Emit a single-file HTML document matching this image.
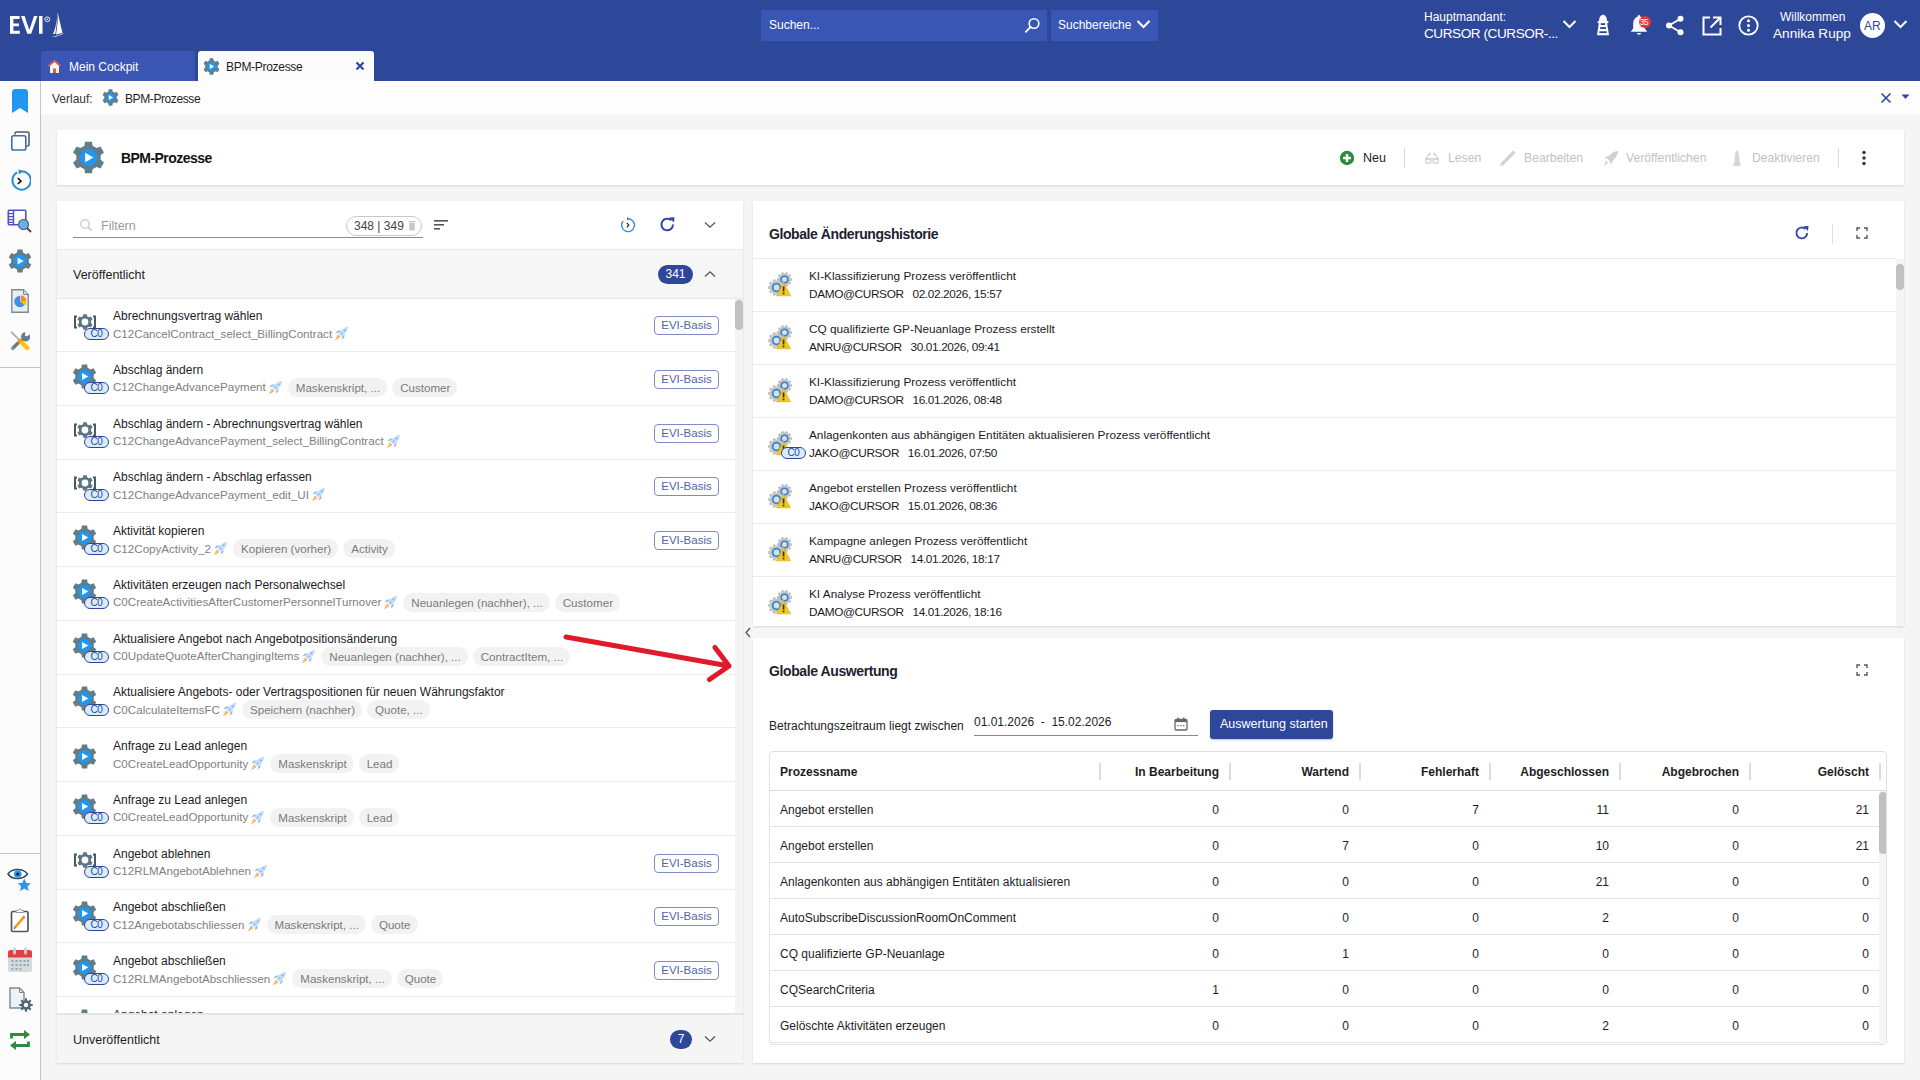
<!DOCTYPE html><html><head><meta charset="utf-8"><title>EVI BPM-Prozesse</title><style>
*{box-sizing:border-box;margin:0;padding:0}
html,body{width:1920px;height:1080px;overflow:hidden}
body{font-family:"Liberation Sans",sans-serif;background:#f5f5f5;position:relative;color:#1d1d1f;font-size:12px}
.a{position:absolute}
.t{position:absolute;white-space:nowrap;line-height:1}
#hdr{left:0;top:0;width:1920px;height:81px;background:#2e4899}
.card{position:absolute;background:#fff;box-shadow:0 1px 2px rgba(0,0,0,.12)}
.row{position:absolute;left:0;width:678px;height:54px;border-bottom:1px solid #ececec}
.ttl{position:absolute;left:56px;top:11px;font-size:12px;color:#1b1b1f;white-space:nowrap;line-height:14px}
.sub{position:absolute;left:56px;top:26px;height:19px;font-size:11.6px;color:#808080;white-space:nowrap;line-height:14px;display:flex;align-items:center}
.chip{display:inline-block;background:#f2f2f2;color:#7a7a7a;border-radius:10px;height:19px;line-height:19px;padding:0 7px 0 8px;margin-left:5px;font-size:11.6px}
.tag{position:absolute;left:597px;top:18px;width:65px;height:19px;border:1px solid #7b8dc4;border-radius:4px;color:#4f64aa;font-size:11.5px;line-height:17px;text-align:center}
.c0{position:absolute;width:25px;height:12px;border:1.3px solid #2e4799;background:#d8ecfc;border-radius:7px;color:#2e4799;font-size:10px;line-height:10px;text-align:center;letter-spacing:-0.3px}
.hrow{position:absolute;left:0;width:1143px;height:53px;border-bottom:1px solid #ececec}
.h1{position:absolute;left:56px;top:10px;font-size:11.8px;color:#1b1b1f;white-space:nowrap;line-height:14px}
.h2{position:absolute;left:56px;top:28px;font-size:11.8px;letter-spacing:-0.35px;color:#1b1b1f;white-space:nowrap;line-height:14px}
.trow{position:absolute;left:0;width:1110px;height:36px;border-bottom:1px solid #e3e3e3}
.tc{position:absolute;top:1px;height:36px;line-height:36px;font-size:12px;color:#1d1d1f;white-space:nowrap}
.num{text-align:right;width:120px}
</style></head><body>
<div id="hdr" class="a"></div>
<svg class="a" style="left:0;top:0" width="52" height="40" viewBox="0 0 52 40"><path d="M10 16 H19.6 V19 H13.4 V23.4 H19 V26.3 H13.4 V30.8 H19.8 V33.8 H10 Z" fill="#fff"/><path d="M21 16 H24.6 L29.3 30 L34 16 H37.5 L31.2 33.8 H27.3 Z" fill="#fff"/><rect x="39" y="16" width="3.5" height="17.8" fill="#fff"/><circle cx="47.3" cy="19.3" r="2.4" stroke="#fff" stroke-width="0.9" fill="none"/><circle cx="47.3" cy="19.3" r="0.8" fill="#fff"/></svg>
<svg class="a" style="left:50px;top:11px" width="16" height="27" viewBox="0 0 16 27"><path d="M7.5 1 C9 8 11 15 12.5 22 L6 23.5 C7.5 16 8 8 7.5 1 Z" fill="#fff"/><path d="M6.6 7 C6.5 13 5 19 3 23 L5.2 23 C6.4 18 7 12 6.6 7Z" fill="#fff"/><path d="M1 26 C6 25 11 23.5 15 21.5 C11 24.5 6 26.2 1 26 Z" fill="#fff"/></svg>
<div class="a" style="left:761px;top:10px;width:286px;height:31px;background:#3a56b5"></div>
<div class="t" style="left:769px;top:19px;font-size:12px;color:#fff">Suchen...</div>
<svg class="a" style="left:1024px;top:17px" width="17" height="17" viewBox="0 0 17 17"><circle cx="10" cy="6.5" r="4.8" stroke="#fff" stroke-width="1.6" fill="none"/><path d="M6.6 10 L1.8 14.8" stroke="#fff" stroke-width="1.8" stroke-linecap="round"/></svg>
<div class="a" style="left:1051px;top:10px;width:107px;height:31px;background:#3a56b5"></div>
<div class="t" style="left:1058px;top:19px;font-size:12px;color:#fff">Suchbereiche</div>
<svg class="a" style="left:1136px;top:19px" width="15" height="11" viewBox="0 0 15 11"><path d="M1.5 2 L7.5 8 L13.5 2" stroke="#fff" stroke-width="2" fill="none"/></svg>
<div class="t" style="left:1424px;top:11px;font-size:12px;color:#fff">Hauptmandant:</div>
<div class="t" style="left:1424px;top:27px;font-size:13.6px;color:#fff;letter-spacing:-0.45px">CURSOR (CURSOR-...</div>
<svg class="a" style="left:1562px;top:19px" width="15" height="11" viewBox="0 0 15 11"><path d="M1.5 2 L7.5 8 L13.5 2" stroke="#fff" stroke-width="2" fill="none"/></svg>
<svg class="a" style="left:1596px;top:14px" width="14" height="22" viewBox="0 0 14 22"><path d="M3 7 C3 3 5 0.7 7 0.7 C9 0.7 11 3 11 7 Z" fill="#fff"/><rect x="1.5" y="7" width="11" height="2.2" rx="1" fill="#fff"/><path d="M2.9 9 H11.1 L13 21.2 H1 Z" fill="#fff"/><rect x="4.7" y="9.2" width="4.4" height="1.8" fill="#2e4899"/><rect x="4.2" y="13.1" width="5.8" height="1.9" fill="#2e4899"/><rect x="3.3" y="17.3" width="7.5" height="1.8" fill="#2e4899"/></svg>
<svg class="a" style="left:1630px;top:14px" width="18" height="22" viewBox="0 0 18 22"><circle cx="9" cy="2.4" r="1.5" fill="#fff"/><path d="M9 2.8 C5 2.8 3.2 6.2 3.2 10 V14.5 L0.8 17.8 H17.2 L14.8 14.5 V10 C14.8 6.2 13 2.8 9 2.8 Z" fill="#fff"/><path d="M6.8 19 C7 21.2 11 21.2 11.2 19 Z" fill="#fff"/></svg>
<div class="a" style="left:1639px;top:16px;width:12px;height:12px;border-radius:6px;background:#e53935"></div>
<div class="t" style="left:1639.5px;top:18px;font-size:8.5px;color:#fff;letter-spacing:-0.4px">35</div>
<svg class="a" style="left:1665px;top:15px" width="20" height="21" viewBox="0 0 20 21"><circle cx="15.5" cy="3.8" r="3" fill="#fff"/><circle cx="4" cy="10.5" r="3" fill="#fff"/><circle cx="15.5" cy="17.2" r="3" fill="#fff"/><path d="M15.5 3.8 L4 10.5 L15.5 17.2" stroke="#fff" stroke-width="1.8" fill="none"/></svg>
<svg class="a" style="left:1702px;top:16px" width="20" height="20" viewBox="0 0 20 20"><path d="M8 1.5 H1.5 V18.5 H18.5 V12" stroke="#fff" stroke-width="2" fill="none"/><path d="M11 1.5 H18.5 V9" stroke="#fff" stroke-width="2" fill="none"/><path d="M18 2 L8.5 11.5" stroke="#fff" stroke-width="2"/></svg>
<svg class="a" style="left:1738px;top:15px" width="21" height="21" viewBox="0 0 21 21"><circle cx="10.5" cy="10.5" r="9.2" stroke="#fff" stroke-width="1.8" fill="none"/><circle cx="10.5" cy="5.8" r="1.5" fill="#fff"/><circle cx="10.5" cy="10.5" r="1.5" fill="#fff"/><circle cx="10.5" cy="15.2" r="1.5" fill="#fff"/></svg>
<div class="t" style="left:1780px;top:11px;font-size:12px;color:#fff">Willkommen</div>
<div class="t" style="left:1773px;top:27px;font-size:13.6px;color:#fff">Annika Rupp</div>
<div class="a" style="left:1860px;top:13px;width:25px;height:25px;border-radius:13px;background:#fff"></div>
<div class="t" style="left:1864px;top:20px;font-size:12px;color:#2e4899">AR</div>
<svg class="a" style="left:1893px;top:19px" width="15" height="11" viewBox="0 0 15 11"><path d="M1.5 2 L7.5 8 L13.5 2" stroke="#fff" stroke-width="2" fill="none"/></svg>
<div class="a" style="left:41px;top:51px;width:154px;height:30px;background:#3a55b4;border-radius:3px 3px 0 0"></div>
<svg class="a" style="left:47px;top:59px" width="15" height="15" viewBox="0 0 15 15"><path d="M7.5 1 L14 7 H12 V14 H3 V7 H1 Z" fill="#f4f4f4"/><path d="M7.5 1 L14 7 L12.6 7.6 L7.5 2.9 L2.4 7.6 L1 7 Z" fill="#e84c3d"/><rect x="6" y="9.5" width="3" height="4.5" fill="#e0612a"/></svg>
<div class="t" style="left:69px;top:61px;font-size:12px;color:#fff">Mein Cockpit</div>
<div class="a" style="left:198px;top:51px;width:176px;height:30px;background:#fcfcfc;border-radius:3px 3px 0 0"></div>
<div class="a" style="left:203px;top:58px"><svg width="17" height="17" viewBox="0 0 24 24"><path d="M9.02 3.51 L9.45 0.48 L14.55 0.48 L14.98 3.51 L17.86 5.17 L20.70 4.03 L23.25 8.45 L20.84 10.34 L20.84 13.66 L23.25 15.55 L20.70 19.97 L17.86 18.83 L14.98 20.49 L14.55 23.52 L9.45 23.52 L9.02 20.49 L6.14 18.83 L3.30 19.97 L0.75 15.55 L3.16 13.66 L3.16 10.34 L0.75 8.45 L3.30 4.03 L6.14 5.17 Z" fill="#607d8b"/><circle cx="12" cy="12" r="6.2" fill="#2196f3"/><path d="M9.6 8.6 L15.6 12 L9.6 15.4 Z" fill="#fff"/></svg></div>
<div class="t" style="left:226px;top:61px;font-size:12px;color:#1d1d1f;letter-spacing:-0.3px">BPM-Prozesse</div>
<svg class="a" style="left:355px;top:61px" width="10" height="10" viewBox="0 0 10 10"><path d="M1.5 1.5 L8.5 8.5 M8.5 1.5 L1.5 8.5" stroke="#2e4899" stroke-width="2.2"/></svg>
<div class="a" style="left:0;top:81px;width:41px;height:999px;background:#fcfcfc;border-right:1px solid #c4c4c4"></div>
<div class="a" style="left:0;top:367px;width:40px;height:1px;background:#c4c4c4"></div>
<div class="a" style="left:0;top:853px;width:40px;height:1px;background:#c4c4c4"></div>
<svg class="a" style="left:12px;top:89px" width="16" height="24" viewBox="0 0 16 24"><path d="M0 3.5 A3.5 3.5 0 0 1 3.5 0 H12.5 A3.5 3.5 0 0 1 16 3.5 V24 L8 19 L0 24 Z" fill="#2196f3"/></svg>
<svg class="a" style="left:10px;top:131px" width="21" height="21" viewBox="0 0 21 21"><path d="M5 3.5 V2.5 A1.5 1.5 0 0 1 6.5 1 H17.5 A1.5 1.5 0 0 1 19 2.5 V13.5 A1.5 1.5 0 0 1 17.5 15 H16.5" stroke="#555" stroke-width="1.5" fill="none"/><rect x="1.8" y="4.8" width="14" height="14.2" rx="1.8" stroke="#3b6db3" stroke-width="1.6" fill="#fff"/></svg>
<svg class="a" style="left:9px;top:169px" width="22" height="23" viewBox="0 0 22 23"><path d="M8.2 3.4 A9.2 9.2 0 1 0 11 2.4" stroke="#2a8ad8" stroke-width="2" fill="none"/><path d="M9.5 0.2 L13.8 2.6 L9.8 5.4 Z" fill="#2a8ad8"/><path d="M8.8 9 L12 12.2 L8.8 15" stroke="#111" stroke-width="1.6" fill="none"/></svg>
<svg class="a" style="left:7px;top:209px" width="25" height="24" viewBox="0 0 25 24"><rect x="1.3" y="1.3" width="17.5" height="14.5" rx="1" stroke="#4b53c2" stroke-width="1.6" fill="#fff"/><path d="M6.5 1.3 V15.8" stroke="#4b53c2" stroke-width="1.4"/><path d="M2 4.6 H6 M2 7.6 H6 M2 10.6 H6 M2 13.4 H6" stroke="#4b53c2" stroke-width="1.2"/><circle cx="16.5" cy="15.5" r="5" fill="#64b0f2" stroke="#555" stroke-width="1.1"/><path d="M20 19 L24 23" stroke="#444" stroke-width="1.8"/></svg>
<div class="a" style="left:8px;top:249px"><svg width="24" height="24" viewBox="0 0 24 24"><path d="M9.02 3.51 L9.45 0.48 L14.55 0.48 L14.98 3.51 L17.86 5.17 L20.70 4.03 L23.25 8.45 L20.84 10.34 L20.84 13.66 L23.25 15.55 L20.70 19.97 L17.86 18.83 L14.98 20.49 L14.55 23.52 L9.45 23.52 L9.02 20.49 L6.14 18.83 L3.30 19.97 L0.75 15.55 L3.16 13.66 L3.16 10.34 L0.75 8.45 L3.30 4.03 L6.14 5.17 Z" fill="#607d8b"/><circle cx="12" cy="12" r="6.2" fill="#2196f3"/><path d="M9.6 8.6 L15.6 12 L9.6 15.4 Z" fill="#fff"/></svg></div>
<svg class="a" style="left:11px;top:289px" width="18" height="24" viewBox="0 0 18 24"><path d="M0.8 0.8 H12.5 L17.2 5.5 V23.2 H0.8 Z" fill="#e9eef5" stroke="#7a8a96" stroke-width="1.4"/><path d="M12.5 0.8 V5.5 H17.2" fill="#cfd8e0" stroke="#7a8a96" stroke-width="1"/><path d="M9 12.5 V6.8 A5.7 5.7 0 1 0 14.7 12.5 Z" fill="#3f8ee8"/><path d="M9.6 12 V6.2 A5.8 5.8 0 0 1 15.4 12 Z" fill="#f28a2e"/><path d="M9.6 12.6 H15.4 A5.8 5.8 0 0 1 13.6 16.8 Z" fill="#f5c023"/></svg>
<svg class="a" style="left:10px;top:331px" width="20" height="20" viewBox="0 0 20 20"><path d="M1.5 1.2 L9.5 9" stroke="#a7b7c1" stroke-width="2" stroke-linecap="round"/><path d="M10 10 L2.8 17.2" stroke="#607d8b" stroke-width="3.4" stroke-linecap="round"/><circle cx="2.8" cy="17.2" r="0.8" fill="#b0bec5"/><path d="M11.2 4.8 A4.6 4.6 0 0 0 15.5 10.5 A4.6 4.6 0 0 0 19.5 3.5 L17 5.6 L14.8 4.4 L15.4 1.2 A4.6 4.6 0 0 0 11.2 4.8 Z" fill="#607d8b"/><path d="M13.5 8 L9.5 12" stroke="#607d8b" stroke-width="2.6"/><path d="M10.5 10.5 L17.2 17" stroke="#ffc107" stroke-width="4.4" stroke-linecap="round"/><path d="M8.6 8.8 L11 11.2" stroke="#ff9800" stroke-width="4.6"/></svg>
<svg class="a" style="left:7px;top:867px" width="27" height="26" viewBox="0 0 27 26"><path d="M1 7 C5 1 16 1 20.5 7 C16 13 5 13 1 7 Z" fill="#fff" stroke="#37474f" stroke-width="1.5"/><circle cx="10.8" cy="7" r="3.8" fill="#2196f3"/><circle cx="10.8" cy="7" r="1.5" fill="#111"/><path d="M17.3 11.5 L19.3 16 L24 16.3 L20.5 19.3 L21.7 24 L17.3 21.5 L13 24 L14.1 19.3 L10.6 16.3 L15.3 16 Z" fill="#2196f3"/></svg>
<svg class="a" style="left:10px;top:908px" width="20" height="25" viewBox="0 0 20 25"><rect x="1.5" y="3.5" width="16.5" height="20" rx="1.5" stroke="#4a5a66" stroke-width="1.7" fill="#fff"/><path d="M6 4.5 V2.5 H8 A1.8 1.8 0 0 1 11.5 2.5 H13.5 V4.5 Z" fill="#fff" stroke="#8a98a4" stroke-width="1"/><path d="M5 19.5 L13.5 9.5" stroke="#f59e0b" stroke-width="2.6"/><path d="M13 10 L14.5 8.3" stroke="#e57373" stroke-width="2.6"/><path d="M4.3 20.8 L5 19.3" stroke="#333" stroke-width="1.2"/></svg>
<svg class="a" style="left:8px;top:947px" width="24" height="25" viewBox="0 0 24 25"><rect x="0" y="3" width="24" height="22" rx="2.5" fill="#d5dadf"/><path d="M0 5.5 A2.5 2.5 0 0 1 2.5 3 H21.5 A2.5 2.5 0 0 1 24 5.5 V10.5 H0 Z" fill="#e53e3e"/><rect x="5" y="0.5" width="3" height="7" rx="1.5" fill="#c9ced4"/><rect x="16" y="0.5" width="3" height="7" rx="1.5" fill="#c9ced4"/><g fill="#9aa3ab"><rect x="3.5" y="13" width="2" height="2"/><rect x="7.5" y="13" width="2" height="2"/><rect x="11.5" y="13" width="2" height="2"/><rect x="15.5" y="13" width="2" height="2"/><rect x="19" y="13" width="2" height="2"/><rect x="3.5" y="17" width="2" height="2"/><rect x="7.5" y="17" width="2" height="2"/><rect x="11.5" y="17" width="2" height="2"/><rect x="15.5" y="17" width="2" height="2"/><rect x="19" y="17" width="2" height="2"/><rect x="3.5" y="21" width="2" height="2"/><rect x="7.5" y="21" width="2" height="2"/><rect x="11.5" y="21" width="2" height="2"/></g></svg>
<svg class="a" style="left:9px;top:987px" width="24" height="26" viewBox="0 0 24 26"><path d="M1 1 H10.5 L15 5.5 V21 H1 Z" fill="#eef2f8" stroke="#7a8a96" stroke-width="1.4"/><path d="M10.5 1 V5.5 H15" fill="none" stroke="#7a8a96" stroke-width="1"/><path d="M21.69 16.96 L23.73 17.04 L23.73 18.96 L21.69 19.04 L21.05 20.58 L22.44 22.08 L21.08 23.44 L19.58 22.05 L18.04 22.69 L17.96 24.73 L16.04 24.73 L15.96 22.69 L14.42 22.05 L12.92 23.44 L11.56 22.08 L12.95 20.58 L12.31 19.04 L10.27 18.96 L10.27 17.04 L12.31 16.96 L12.95 15.42 L11.56 13.92 L12.92 12.56 L14.42 13.95 L15.96 13.31 L16.04 11.27 L17.96 11.27 L18.04 13.31 L19.58 13.95 L21.08 12.56 L22.44 13.92 L21.05 15.42 Z" fill="#4f6573"/><circle cx="17" cy="18" r="2.2" fill="#fff"/></svg>
<svg class="a" style="left:9px;top:1029px" width="22" height="22" viewBox="0 0 22 22"><path d="M2.5 9.5 V5.5 H16" stroke="#2e8b3e" stroke-width="2.8" fill="none"/><path d="M15 1 L21 5.5 L15 10 Z" fill="#2e8b3e"/><path d="M19.5 12.5 V16.5 H6" stroke="#2e8b3e" stroke-width="2.8" fill="none"/><path d="M7 12 L1 16.5 L7 21 Z" fill="#2e8b3e"/></svg>
<div class="a" style="left:41px;top:81px;width:1879px;height:33px;background:#fdfdfd"></div>
<div class="t" style="left:52px;top:93px;font-size:12px;color:#333">Verlauf:</div>
<div class="a" style="left:102px;top:89px"><svg width="17" height="17" viewBox="0 0 24 24"><path d="M9.02 3.51 L9.45 0.48 L14.55 0.48 L14.98 3.51 L17.86 5.17 L20.70 4.03 L23.25 8.45 L20.84 10.34 L20.84 13.66 L23.25 15.55 L20.70 19.97 L17.86 18.83 L14.98 20.49 L14.55 23.52 L9.45 23.52 L9.02 20.49 L6.14 18.83 L3.30 19.97 L0.75 15.55 L3.16 13.66 L3.16 10.34 L0.75 8.45 L3.30 4.03 L6.14 5.17 Z" fill="#607d8b"/><circle cx="12" cy="12" r="6.2" fill="#2196f3"/><path d="M9.6 8.6 L15.6 12 L9.6 15.4 Z" fill="#fff"/></svg></div>
<div class="t" style="left:125px;top:93px;font-size:12px;color:#1d1d1f;letter-spacing:-0.4px">BPM-Prozesse</div>
<svg class="a" style="left:1880px;top:92px" width="12" height="12" viewBox="0 0 12 12"><path d="M1.5 1.5 L10.5 10.5 M10.5 1.5 L1.5 10.5" stroke="#2e4899" stroke-width="1.6"/></svg>
<svg class="a" style="left:1901px;top:94px" width="9" height="6" viewBox="0 0 9 6"><path d="M0.5 0.5 H8.5 L4.5 5 Z" fill="#2e4899"/></svg>
<div class="card" style="left:57px;top:130px;width:1847px;height:55px"></div>
<div class="a" style="left:72px;top:141px"><svg width="33" height="33" viewBox="0 0 24 24"><path d="M9.02 3.51 L9.45 0.48 L14.55 0.48 L14.98 3.51 L17.86 5.17 L20.70 4.03 L23.25 8.45 L20.84 10.34 L20.84 13.66 L23.25 15.55 L20.70 19.97 L17.86 18.83 L14.98 20.49 L14.55 23.52 L9.45 23.52 L9.02 20.49 L6.14 18.83 L3.30 19.97 L0.75 15.55 L3.16 13.66 L3.16 10.34 L0.75 8.45 L3.30 4.03 L6.14 5.17 Z" fill="#607d8b"/><circle cx="12" cy="12" r="6.2" fill="#2196f3"/><path d="M9.6 8.6 L15.6 12 L9.6 15.4 Z" fill="#fff"/></svg></div>
<div class="t" style="left:121px;top:151px;font-size:14px;font-weight:bold;color:#111;letter-spacing:-0.55px">BPM-Prozesse</div>
<svg class="a" style="left:1339px;top:150px" width="16" height="16" viewBox="0 0 16 16"><circle cx="8" cy="8" r="7.2" fill="#2e8b3e"/><path d="M8 4 V12 M4 8 H12" stroke="#fff" stroke-width="2.4"/></svg>
<div class="t" style="left:1363px;top:152px;font-size:12.5px;color:#1d1d1f">Neu</div>
<div class="a" style="left:1404px;top:148px;width:1px;height:20px;background:#d8d8d8"></div>
<svg class="a" style="left:1424px;top:152px" width="16" height="12" viewBox="0 0 16 12"><path d="M1 7 H15" stroke="#cdcdcd" stroke-width="1.3"/><path d="M1.6 7 L5.4 1.2 L6.8 2.8 M14.4 7 L10.6 1.2 L9.2 2.8" stroke="#cdcdcd" stroke-width="1.1" fill="none"/><rect x="1.8" y="6.6" width="5" height="4.6" rx="1.5" stroke="#cdcdcd" stroke-width="1.2" fill="none"/><rect x="9.2" y="6.6" width="5" height="4.6" rx="1.5" stroke="#cdcdcd" stroke-width="1.2" fill="none"/></svg>
<div class="t" style="left:1448px;top:152px;font-size:12.2px;color:#c2c2c2">Lesen</div>
<svg class="a" style="left:1499px;top:149px" width="18" height="18" viewBox="0 0 18 18"><path d="M14 1.5 L16.5 4 L4 16.5 L1.5 17 L1.8 14.3 Z" fill="#d2d2d2"/></svg>
<div class="t" style="left:1524px;top:152px;font-size:12.2px;color:#c2c2c2">Bearbeiten</div>
<svg class="a" style="left:1602px;top:150px" width="17" height="17" viewBox="0 0 17 17"><path d="M16 1 C11 1.5 7.5 4.5 5 8.5 L8.5 12 C12.5 9.5 15.5 6 16 1 Z" fill="#cfcfcf"/><path d="M5 8.5 L2 9 L5 6 L8 5.8 Z M8.5 12 L8 15 L11 12 L11.2 9 Z" fill="#d6d6d6"/><path d="M4 10.5 L6.5 13 L1.5 16 Z" fill="#d6d6d6"/></svg>
<div class="t" style="left:1626px;top:152px;font-size:12.2px;color:#c2c2c2">Veröffentlichen</div>
<svg class="a" style="left:1731px;top:149px" width="12" height="18" viewBox="0 0 12 18"><path d="M6 1 C8 3 8.5 7 8.3 12 L9.5 14.5 V17 H2.5 V14.5 L3.7 12 C3.5 7 4 3 6 1 Z" fill="#d6d6d6"/></svg>
<div class="t" style="left:1752px;top:152px;font-size:12.2px;color:#c2c2c2">Deaktivieren</div>
<div class="a" style="left:1838px;top:148px;width:1px;height:20px;background:#d8d8d8"></div>
<svg class="a" style="left:1861px;top:150px" width="6" height="16" viewBox="0 0 6 16"><circle cx="3" cy="2.5" r="1.7" fill="#333"/><circle cx="3" cy="8" r="1.7" fill="#333"/><circle cx="3" cy="13.5" r="1.7" fill="#333"/></svg>
<div class="card" style="left:57px;top:201px;width:686px;height:862px;overflow:hidden">
<div class="a" style="left:16px;top:36px;width:350px;height:1px;background:#8a8a8a"></div>
<svg class="a" style="left:22px;top:17px" width="14" height="14" viewBox="0 0 14 14"><circle cx="6" cy="6" r="4.3" stroke="#cfcfcf" stroke-width="1.5" fill="none"/><path d="M9.2 9.2 L12.6 12.6" stroke="#cfcfcf" stroke-width="1.8"/></svg>
<div class="t" style="left:44px;top:19px;font-size:12.5px;color:#9a9a9a">Filtern</div>
<div class="a" style="left:289px;top:15px;width:76px;height:20px;border:1px solid #c8c8c8;border-radius:10px"></div>
<div class="t" style="left:297px;top:19px;font-size:12px;color:#444">348 | 349</div>
<svg class="a" style="left:351px;top:19px" width="8" height="11" viewBox="0 0 8 11"><rect x="0.5" y="1" width="7" height="1.2" fill="#c8c8c8"/><rect x="1.2" y="2.8" width="5.6" height="7.6" fill="#c8c8c8"/></svg>
<svg class="a" style="left:377px;top:18px" width="15" height="12" viewBox="0 0 15 12"><rect x="0" y="1" width="14" height="1.6" fill="#555"/><rect x="0" y="5" width="10" height="1.6" fill="#555"/><rect x="0" y="9" width="6" height="1.6" fill="#555"/></svg>
<svg class="a" style="left:563px;top:15px" width="16" height="17" viewBox="0 0 16 17"><path d="M8 2.8 A6.4 6.4 0 1 1 3.2 5" stroke="#3a8fdc" stroke-width="1.4" fill="none"/><path d="M7 0.8 L9.6 2.8 L7 4.8 Z" fill="#3a8fdc"/><path d="M6.8 6.8 L8.8 9.2 L6.8 11.4" stroke="#222" stroke-width="1.2" fill="none"/></svg>
<svg class="a" style="left:602px;top:15px" width="17" height="17" viewBox="0 0 17 17"><path d="M14 8.5 A5.8 5.8 0 1 1 12.2 4.3" stroke="#2e47a8" stroke-width="2" fill="none"/><path d="M10 1.5 L15.5 1.2 L15 6.6 Z" fill="#2e47a8"/></svg>
<svg class="a" style="left:647px;top:20px" width="12" height="8" viewBox="0 0 12 8"><path d="M1 1.5 L6 6.2 L11 1.5" stroke="#555" stroke-width="1.3" fill="none"/></svg>
<div class="a" style="left:0;top:48px;width:686px;height:50px;background:#f6f6f6;border-top:1px solid #e8e8e8;border-bottom:1px solid #e6e6e6"></div>
<div class="t" style="left:16px;top:68px;font-size:12.5px;color:#1d1d1f">Veröffentlicht</div>
<div class="a" style="left:601px;top:64px;width:35px;height:19px;border-radius:10px;background:#2e4799;color:#fff;font-size:12px;line-height:19px;text-align:center">341</div>
<svg class="a" style="left:647px;top:69px" width="12" height="8" viewBox="0 0 12 8"><path d="M1 6.5 L6 1.8 L11 6.5" stroke="#555" stroke-width="1.3" fill="none"/></svg>
<div class="a" style="left:0;top:98px;width:686px;height:714px;overflow:hidden">
<div class="row" style="top:-1.00px">
<div class="a" style="left:16px;top:12px"><svg width="24" height="24" viewBox="0 0 24 24"><path d="M9.98 6.24 L10.27 4.19 L13.73 4.19 L14.02 6.24 L15.97 7.37 L17.90 6.60 L19.63 9.59 L17.99 10.87 L17.99 13.13 L19.63 14.41 L17.90 17.40 L15.97 16.63 L14.02 17.76 L13.73 19.81 L10.27 19.81 L9.98 17.76 L8.03 16.63 L6.10 17.40 L4.37 14.41 L6.01 13.13 L6.01 10.87 L4.37 9.59 L6.10 6.60 L8.03 7.37 Z" fill="#5b7582"/><circle cx="12" cy="12" r="3.4" fill="#fff"/><path d="M4 6.6 H2 V17.4 H4" stroke="#4a5a63" stroke-width="2" fill="none"/><path d="M20 6.6 H22 V17.4 H20" stroke="#4a5a63" stroke-width="2" fill="none"/></svg></div>
<div class="c0" style="left:27px;top:30px">C0</div>
<div class="ttl">Abrechnungsvertrag wählen</div>
<div class="sub">C12CancelContract_select_BillingContract<span style="margin-left:2px"><svg width="15" height="15" viewBox="0 0 15 15" style="display:block"><path d="M14.2 0.8 C10.6 1 7 3.4 4.2 7.6 L7.4 10.8 C11.6 8 14 4.4 14.2 0.8 Z" fill="#c6def7"/><path d="M4.8 6.2 L1.4 7.4 L3.6 4.8 L6.8 4.4 Z" fill="#86b4e6"/><path d="M8.8 10.2 L7.6 13.6 L10.2 11.4 L10.6 8.2 Z" fill="#86b4e6"/><circle cx="10.6" cy="4.4" r="0.9" fill="#74aef0"/><circle cx="7.6" cy="7.4" r="0.8" fill="#74aef0"/><path d="M3.8 8.6 L6.4 11.2 L1 14.2 Z" fill="#f8a35a"/><path d="M3.6 10 L5 11.4 L2.4 12.6 Z" fill="#fcd36a"/></svg></span></div>
<div class="tag">EVI-Basis</div>
</div>
<div class="row" style="top:52.75px">
<div class="a" style="left:15px;top:12px"><svg width="25" height="25" viewBox="0 0 24 24"><path d="M9.02 3.51 L9.45 0.48 L14.55 0.48 L14.98 3.51 L17.86 5.17 L20.70 4.03 L23.25 8.45 L20.84 10.34 L20.84 13.66 L23.25 15.55 L20.70 19.97 L17.86 18.83 L14.98 20.49 L14.55 23.52 L9.45 23.52 L9.02 20.49 L6.14 18.83 L3.30 19.97 L0.75 15.55 L3.16 13.66 L3.16 10.34 L0.75 8.45 L3.30 4.03 L6.14 5.17 Z" fill="#607d8b"/><circle cx="12" cy="12" r="6.2" fill="#2196f3"/><path d="M9.6 8.6 L15.6 12 L9.6 15.4 Z" fill="#fff"/></svg></div>
<div class="c0" style="left:27px;top:30px">C0</div>
<div class="ttl">Abschlag ändern</div>
<div class="sub">C12ChangeAdvancePayment<span style="margin-left:2px"><svg width="15" height="15" viewBox="0 0 15 15" style="display:block"><path d="M14.2 0.8 C10.6 1 7 3.4 4.2 7.6 L7.4 10.8 C11.6 8 14 4.4 14.2 0.8 Z" fill="#c6def7"/><path d="M4.8 6.2 L1.4 7.4 L3.6 4.8 L6.8 4.4 Z" fill="#86b4e6"/><path d="M8.8 10.2 L7.6 13.6 L10.2 11.4 L10.6 8.2 Z" fill="#86b4e6"/><circle cx="10.6" cy="4.4" r="0.9" fill="#74aef0"/><circle cx="7.6" cy="7.4" r="0.8" fill="#74aef0"/><path d="M3.8 8.6 L6.4 11.2 L1 14.2 Z" fill="#f8a35a"/><path d="M3.6 10 L5 11.4 L2.4 12.6 Z" fill="#fcd36a"/></svg></span><span class="chip">Maskenskript, ...</span><span class="chip">Customer</span></div>
<div class="tag">EVI-Basis</div>
</div>
<div class="row" style="top:106.50px">
<div class="a" style="left:16px;top:12px"><svg width="24" height="24" viewBox="0 0 24 24"><path d="M9.98 6.24 L10.27 4.19 L13.73 4.19 L14.02 6.24 L15.97 7.37 L17.90 6.60 L19.63 9.59 L17.99 10.87 L17.99 13.13 L19.63 14.41 L17.90 17.40 L15.97 16.63 L14.02 17.76 L13.73 19.81 L10.27 19.81 L9.98 17.76 L8.03 16.63 L6.10 17.40 L4.37 14.41 L6.01 13.13 L6.01 10.87 L4.37 9.59 L6.10 6.60 L8.03 7.37 Z" fill="#5b7582"/><circle cx="12" cy="12" r="3.4" fill="#fff"/><path d="M4 6.6 H2 V17.4 H4" stroke="#4a5a63" stroke-width="2" fill="none"/><path d="M20 6.6 H22 V17.4 H20" stroke="#4a5a63" stroke-width="2" fill="none"/></svg></div>
<div class="c0" style="left:27px;top:30px">C0</div>
<div class="ttl">Abschlag ändern - Abrechnungsvertrag wählen</div>
<div class="sub">C12ChangeAdvancePayment_select_BillingContract<span style="margin-left:2px"><svg width="15" height="15" viewBox="0 0 15 15" style="display:block"><path d="M14.2 0.8 C10.6 1 7 3.4 4.2 7.6 L7.4 10.8 C11.6 8 14 4.4 14.2 0.8 Z" fill="#c6def7"/><path d="M4.8 6.2 L1.4 7.4 L3.6 4.8 L6.8 4.4 Z" fill="#86b4e6"/><path d="M8.8 10.2 L7.6 13.6 L10.2 11.4 L10.6 8.2 Z" fill="#86b4e6"/><circle cx="10.6" cy="4.4" r="0.9" fill="#74aef0"/><circle cx="7.6" cy="7.4" r="0.8" fill="#74aef0"/><path d="M3.8 8.6 L6.4 11.2 L1 14.2 Z" fill="#f8a35a"/><path d="M3.6 10 L5 11.4 L2.4 12.6 Z" fill="#fcd36a"/></svg></span></div>
<div class="tag">EVI-Basis</div>
</div>
<div class="row" style="top:160.25px">
<div class="a" style="left:16px;top:12px"><svg width="24" height="24" viewBox="0 0 24 24"><path d="M9.98 6.24 L10.27 4.19 L13.73 4.19 L14.02 6.24 L15.97 7.37 L17.90 6.60 L19.63 9.59 L17.99 10.87 L17.99 13.13 L19.63 14.41 L17.90 17.40 L15.97 16.63 L14.02 17.76 L13.73 19.81 L10.27 19.81 L9.98 17.76 L8.03 16.63 L6.10 17.40 L4.37 14.41 L6.01 13.13 L6.01 10.87 L4.37 9.59 L6.10 6.60 L8.03 7.37 Z" fill="#5b7582"/><circle cx="12" cy="12" r="3.4" fill="#fff"/><path d="M4 6.6 H2 V17.4 H4" stroke="#4a5a63" stroke-width="2" fill="none"/><path d="M20 6.6 H22 V17.4 H20" stroke="#4a5a63" stroke-width="2" fill="none"/></svg></div>
<div class="c0" style="left:27px;top:30px">C0</div>
<div class="ttl">Abschlag ändern - Abschlag erfassen</div>
<div class="sub">C12ChangeAdvancePayment_edit_UI<span style="margin-left:2px"><svg width="15" height="15" viewBox="0 0 15 15" style="display:block"><path d="M14.2 0.8 C10.6 1 7 3.4 4.2 7.6 L7.4 10.8 C11.6 8 14 4.4 14.2 0.8 Z" fill="#c6def7"/><path d="M4.8 6.2 L1.4 7.4 L3.6 4.8 L6.8 4.4 Z" fill="#86b4e6"/><path d="M8.8 10.2 L7.6 13.6 L10.2 11.4 L10.6 8.2 Z" fill="#86b4e6"/><circle cx="10.6" cy="4.4" r="0.9" fill="#74aef0"/><circle cx="7.6" cy="7.4" r="0.8" fill="#74aef0"/><path d="M3.8 8.6 L6.4 11.2 L1 14.2 Z" fill="#f8a35a"/><path d="M3.6 10 L5 11.4 L2.4 12.6 Z" fill="#fcd36a"/></svg></span></div>
<div class="tag">EVI-Basis</div>
</div>
<div class="row" style="top:214.00px">
<div class="a" style="left:15px;top:12px"><svg width="25" height="25" viewBox="0 0 24 24"><path d="M9.02 3.51 L9.45 0.48 L14.55 0.48 L14.98 3.51 L17.86 5.17 L20.70 4.03 L23.25 8.45 L20.84 10.34 L20.84 13.66 L23.25 15.55 L20.70 19.97 L17.86 18.83 L14.98 20.49 L14.55 23.52 L9.45 23.52 L9.02 20.49 L6.14 18.83 L3.30 19.97 L0.75 15.55 L3.16 13.66 L3.16 10.34 L0.75 8.45 L3.30 4.03 L6.14 5.17 Z" fill="#607d8b"/><circle cx="12" cy="12" r="6.2" fill="#2196f3"/><path d="M9.6 8.6 L15.6 12 L9.6 15.4 Z" fill="#fff"/></svg></div>
<div class="c0" style="left:27px;top:30px">C0</div>
<div class="ttl">Aktivität kopieren</div>
<div class="sub">C12CopyActivity_2<span style="margin-left:2px"><svg width="15" height="15" viewBox="0 0 15 15" style="display:block"><path d="M14.2 0.8 C10.6 1 7 3.4 4.2 7.6 L7.4 10.8 C11.6 8 14 4.4 14.2 0.8 Z" fill="#c6def7"/><path d="M4.8 6.2 L1.4 7.4 L3.6 4.8 L6.8 4.4 Z" fill="#86b4e6"/><path d="M8.8 10.2 L7.6 13.6 L10.2 11.4 L10.6 8.2 Z" fill="#86b4e6"/><circle cx="10.6" cy="4.4" r="0.9" fill="#74aef0"/><circle cx="7.6" cy="7.4" r="0.8" fill="#74aef0"/><path d="M3.8 8.6 L6.4 11.2 L1 14.2 Z" fill="#f8a35a"/><path d="M3.6 10 L5 11.4 L2.4 12.6 Z" fill="#fcd36a"/></svg></span><span class="chip">Kopieren (vorher)</span><span class="chip">Activity</span></div>
<div class="tag">EVI-Basis</div>
</div>
<div class="row" style="top:267.75px">
<div class="a" style="left:15px;top:12px"><svg width="25" height="25" viewBox="0 0 24 24"><path d="M9.02 3.51 L9.45 0.48 L14.55 0.48 L14.98 3.51 L17.86 5.17 L20.70 4.03 L23.25 8.45 L20.84 10.34 L20.84 13.66 L23.25 15.55 L20.70 19.97 L17.86 18.83 L14.98 20.49 L14.55 23.52 L9.45 23.52 L9.02 20.49 L6.14 18.83 L3.30 19.97 L0.75 15.55 L3.16 13.66 L3.16 10.34 L0.75 8.45 L3.30 4.03 L6.14 5.17 Z" fill="#607d8b"/><circle cx="12" cy="12" r="6.2" fill="#2196f3"/><path d="M9.6 8.6 L15.6 12 L9.6 15.4 Z" fill="#fff"/></svg></div>
<div class="c0" style="left:27px;top:30px">C0</div>
<div class="ttl">Aktivitäten erzeugen nach Personalwechsel</div>
<div class="sub">C0CreateActivitiesAfterCustomerPersonnelTurnover<span style="margin-left:2px"><svg width="15" height="15" viewBox="0 0 15 15" style="display:block"><path d="M14.2 0.8 C10.6 1 7 3.4 4.2 7.6 L7.4 10.8 C11.6 8 14 4.4 14.2 0.8 Z" fill="#c6def7"/><path d="M4.8 6.2 L1.4 7.4 L3.6 4.8 L6.8 4.4 Z" fill="#86b4e6"/><path d="M8.8 10.2 L7.6 13.6 L10.2 11.4 L10.6 8.2 Z" fill="#86b4e6"/><circle cx="10.6" cy="4.4" r="0.9" fill="#74aef0"/><circle cx="7.6" cy="7.4" r="0.8" fill="#74aef0"/><path d="M3.8 8.6 L6.4 11.2 L1 14.2 Z" fill="#f8a35a"/><path d="M3.6 10 L5 11.4 L2.4 12.6 Z" fill="#fcd36a"/></svg></span><span class="chip">Neuanlegen (nachher), ...</span><span class="chip">Customer</span></div>
</div>
<div class="row" style="top:321.50px">
<div class="a" style="left:15px;top:12px"><svg width="25" height="25" viewBox="0 0 24 24"><path d="M9.02 3.51 L9.45 0.48 L14.55 0.48 L14.98 3.51 L17.86 5.17 L20.70 4.03 L23.25 8.45 L20.84 10.34 L20.84 13.66 L23.25 15.55 L20.70 19.97 L17.86 18.83 L14.98 20.49 L14.55 23.52 L9.45 23.52 L9.02 20.49 L6.14 18.83 L3.30 19.97 L0.75 15.55 L3.16 13.66 L3.16 10.34 L0.75 8.45 L3.30 4.03 L6.14 5.17 Z" fill="#607d8b"/><circle cx="12" cy="12" r="6.2" fill="#2196f3"/><path d="M9.6 8.6 L15.6 12 L9.6 15.4 Z" fill="#fff"/></svg></div>
<div class="c0" style="left:27px;top:30px">C0</div>
<div class="ttl">Aktualisiere Angebot nach Angebotpositionsänderung</div>
<div class="sub">C0UpdateQuoteAfterChangingItems<span style="margin-left:2px"><svg width="15" height="15" viewBox="0 0 15 15" style="display:block"><path d="M14.2 0.8 C10.6 1 7 3.4 4.2 7.6 L7.4 10.8 C11.6 8 14 4.4 14.2 0.8 Z" fill="#c6def7"/><path d="M4.8 6.2 L1.4 7.4 L3.6 4.8 L6.8 4.4 Z" fill="#86b4e6"/><path d="M8.8 10.2 L7.6 13.6 L10.2 11.4 L10.6 8.2 Z" fill="#86b4e6"/><circle cx="10.6" cy="4.4" r="0.9" fill="#74aef0"/><circle cx="7.6" cy="7.4" r="0.8" fill="#74aef0"/><path d="M3.8 8.6 L6.4 11.2 L1 14.2 Z" fill="#f8a35a"/><path d="M3.6 10 L5 11.4 L2.4 12.6 Z" fill="#fcd36a"/></svg></span><span class="chip">Neuanlegen (nachher), ...</span><span class="chip">ContractItem, ...</span></div>
</div>
<div class="row" style="top:375.25px">
<div class="a" style="left:15px;top:12px"><svg width="25" height="25" viewBox="0 0 24 24"><path d="M9.02 3.51 L9.45 0.48 L14.55 0.48 L14.98 3.51 L17.86 5.17 L20.70 4.03 L23.25 8.45 L20.84 10.34 L20.84 13.66 L23.25 15.55 L20.70 19.97 L17.86 18.83 L14.98 20.49 L14.55 23.52 L9.45 23.52 L9.02 20.49 L6.14 18.83 L3.30 19.97 L0.75 15.55 L3.16 13.66 L3.16 10.34 L0.75 8.45 L3.30 4.03 L6.14 5.17 Z" fill="#607d8b"/><circle cx="12" cy="12" r="6.2" fill="#2196f3"/><path d="M9.6 8.6 L15.6 12 L9.6 15.4 Z" fill="#fff"/></svg></div>
<div class="c0" style="left:27px;top:30px">C0</div>
<div class="ttl">Aktualisiere Angebots- oder Vertragspositionen für neuen Währungsfaktor</div>
<div class="sub">C0CalculateItemsFC<span style="margin-left:2px"><svg width="15" height="15" viewBox="0 0 15 15" style="display:block"><path d="M14.2 0.8 C10.6 1 7 3.4 4.2 7.6 L7.4 10.8 C11.6 8 14 4.4 14.2 0.8 Z" fill="#c6def7"/><path d="M4.8 6.2 L1.4 7.4 L3.6 4.8 L6.8 4.4 Z" fill="#86b4e6"/><path d="M8.8 10.2 L7.6 13.6 L10.2 11.4 L10.6 8.2 Z" fill="#86b4e6"/><circle cx="10.6" cy="4.4" r="0.9" fill="#74aef0"/><circle cx="7.6" cy="7.4" r="0.8" fill="#74aef0"/><path d="M3.8 8.6 L6.4 11.2 L1 14.2 Z" fill="#f8a35a"/><path d="M3.6 10 L5 11.4 L2.4 12.6 Z" fill="#fcd36a"/></svg></span><span class="chip">Speichern (nachher)</span><span class="chip">Quote, ...</span></div>
</div>
<div class="row" style="top:429.00px">
<div class="a" style="left:15px;top:16px"><svg width="25" height="25" viewBox="0 0 24 24"><path d="M9.02 3.51 L9.45 0.48 L14.55 0.48 L14.98 3.51 L17.86 5.17 L20.70 4.03 L23.25 8.45 L20.84 10.34 L20.84 13.66 L23.25 15.55 L20.70 19.97 L17.86 18.83 L14.98 20.49 L14.55 23.52 L9.45 23.52 L9.02 20.49 L6.14 18.83 L3.30 19.97 L0.75 15.55 L3.16 13.66 L3.16 10.34 L0.75 8.45 L3.30 4.03 L6.14 5.17 Z" fill="#607d8b"/><circle cx="12" cy="12" r="6.2" fill="#2196f3"/><path d="M9.6 8.6 L15.6 12 L9.6 15.4 Z" fill="#fff"/></svg></div>
<div class="ttl">Anfrage zu Lead anlegen</div>
<div class="sub">C0CreateLeadOpportunity<span style="margin-left:2px"><svg width="15" height="15" viewBox="0 0 15 15" style="display:block"><path d="M14.2 0.8 C10.6 1 7 3.4 4.2 7.6 L7.4 10.8 C11.6 8 14 4.4 14.2 0.8 Z" fill="#c6def7"/><path d="M4.8 6.2 L1.4 7.4 L3.6 4.8 L6.8 4.4 Z" fill="#86b4e6"/><path d="M8.8 10.2 L7.6 13.6 L10.2 11.4 L10.6 8.2 Z" fill="#86b4e6"/><circle cx="10.6" cy="4.4" r="0.9" fill="#74aef0"/><circle cx="7.6" cy="7.4" r="0.8" fill="#74aef0"/><path d="M3.8 8.6 L6.4 11.2 L1 14.2 Z" fill="#f8a35a"/><path d="M3.6 10 L5 11.4 L2.4 12.6 Z" fill="#fcd36a"/></svg></span><span class="chip">Maskenskript</span><span class="chip">Lead</span></div>
</div>
<div class="row" style="top:482.75px">
<div class="a" style="left:15px;top:12px"><svg width="25" height="25" viewBox="0 0 24 24"><path d="M9.02 3.51 L9.45 0.48 L14.55 0.48 L14.98 3.51 L17.86 5.17 L20.70 4.03 L23.25 8.45 L20.84 10.34 L20.84 13.66 L23.25 15.55 L20.70 19.97 L17.86 18.83 L14.98 20.49 L14.55 23.52 L9.45 23.52 L9.02 20.49 L6.14 18.83 L3.30 19.97 L0.75 15.55 L3.16 13.66 L3.16 10.34 L0.75 8.45 L3.30 4.03 L6.14 5.17 Z" fill="#607d8b"/><circle cx="12" cy="12" r="6.2" fill="#2196f3"/><path d="M9.6 8.6 L15.6 12 L9.6 15.4 Z" fill="#fff"/></svg></div>
<div class="c0" style="left:27px;top:30px">C0</div>
<div class="ttl">Anfrage zu Lead anlegen</div>
<div class="sub">C0CreateLeadOpportunity<span style="margin-left:2px"><svg width="15" height="15" viewBox="0 0 15 15" style="display:block"><path d="M14.2 0.8 C10.6 1 7 3.4 4.2 7.6 L7.4 10.8 C11.6 8 14 4.4 14.2 0.8 Z" fill="#c6def7"/><path d="M4.8 6.2 L1.4 7.4 L3.6 4.8 L6.8 4.4 Z" fill="#86b4e6"/><path d="M8.8 10.2 L7.6 13.6 L10.2 11.4 L10.6 8.2 Z" fill="#86b4e6"/><circle cx="10.6" cy="4.4" r="0.9" fill="#74aef0"/><circle cx="7.6" cy="7.4" r="0.8" fill="#74aef0"/><path d="M3.8 8.6 L6.4 11.2 L1 14.2 Z" fill="#f8a35a"/><path d="M3.6 10 L5 11.4 L2.4 12.6 Z" fill="#fcd36a"/></svg></span><span class="chip">Maskenskript</span><span class="chip">Lead</span></div>
</div>
<div class="row" style="top:536.50px">
<div class="a" style="left:16px;top:12px"><svg width="24" height="24" viewBox="0 0 24 24"><path d="M9.98 6.24 L10.27 4.19 L13.73 4.19 L14.02 6.24 L15.97 7.37 L17.90 6.60 L19.63 9.59 L17.99 10.87 L17.99 13.13 L19.63 14.41 L17.90 17.40 L15.97 16.63 L14.02 17.76 L13.73 19.81 L10.27 19.81 L9.98 17.76 L8.03 16.63 L6.10 17.40 L4.37 14.41 L6.01 13.13 L6.01 10.87 L4.37 9.59 L6.10 6.60 L8.03 7.37 Z" fill="#5b7582"/><circle cx="12" cy="12" r="3.4" fill="#fff"/><path d="M4 6.6 H2 V17.4 H4" stroke="#4a5a63" stroke-width="2" fill="none"/><path d="M20 6.6 H22 V17.4 H20" stroke="#4a5a63" stroke-width="2" fill="none"/></svg></div>
<div class="c0" style="left:27px;top:30px">C0</div>
<div class="ttl">Angebot ablehnen</div>
<div class="sub">C12RLMAngebotAblehnen<span style="margin-left:2px"><svg width="15" height="15" viewBox="0 0 15 15" style="display:block"><path d="M14.2 0.8 C10.6 1 7 3.4 4.2 7.6 L7.4 10.8 C11.6 8 14 4.4 14.2 0.8 Z" fill="#c6def7"/><path d="M4.8 6.2 L1.4 7.4 L3.6 4.8 L6.8 4.4 Z" fill="#86b4e6"/><path d="M8.8 10.2 L7.6 13.6 L10.2 11.4 L10.6 8.2 Z" fill="#86b4e6"/><circle cx="10.6" cy="4.4" r="0.9" fill="#74aef0"/><circle cx="7.6" cy="7.4" r="0.8" fill="#74aef0"/><path d="M3.8 8.6 L6.4 11.2 L1 14.2 Z" fill="#f8a35a"/><path d="M3.6 10 L5 11.4 L2.4 12.6 Z" fill="#fcd36a"/></svg></span></div>
<div class="tag">EVI-Basis</div>
</div>
<div class="row" style="top:590.25px">
<div class="a" style="left:15px;top:12px"><svg width="25" height="25" viewBox="0 0 24 24"><path d="M9.02 3.51 L9.45 0.48 L14.55 0.48 L14.98 3.51 L17.86 5.17 L20.70 4.03 L23.25 8.45 L20.84 10.34 L20.84 13.66 L23.25 15.55 L20.70 19.97 L17.86 18.83 L14.98 20.49 L14.55 23.52 L9.45 23.52 L9.02 20.49 L6.14 18.83 L3.30 19.97 L0.75 15.55 L3.16 13.66 L3.16 10.34 L0.75 8.45 L3.30 4.03 L6.14 5.17 Z" fill="#607d8b"/><circle cx="12" cy="12" r="6.2" fill="#2196f3"/><path d="M9.6 8.6 L15.6 12 L9.6 15.4 Z" fill="#fff"/></svg></div>
<div class="c0" style="left:27px;top:30px">C0</div>
<div class="ttl">Angebot abschließen</div>
<div class="sub">C12Angebotabschliessen<span style="margin-left:2px"><svg width="15" height="15" viewBox="0 0 15 15" style="display:block"><path d="M14.2 0.8 C10.6 1 7 3.4 4.2 7.6 L7.4 10.8 C11.6 8 14 4.4 14.2 0.8 Z" fill="#c6def7"/><path d="M4.8 6.2 L1.4 7.4 L3.6 4.8 L6.8 4.4 Z" fill="#86b4e6"/><path d="M8.8 10.2 L7.6 13.6 L10.2 11.4 L10.6 8.2 Z" fill="#86b4e6"/><circle cx="10.6" cy="4.4" r="0.9" fill="#74aef0"/><circle cx="7.6" cy="7.4" r="0.8" fill="#74aef0"/><path d="M3.8 8.6 L6.4 11.2 L1 14.2 Z" fill="#f8a35a"/><path d="M3.6 10 L5 11.4 L2.4 12.6 Z" fill="#fcd36a"/></svg></span><span class="chip">Maskenskript, ...</span><span class="chip">Quote</span></div>
<div class="tag">EVI-Basis</div>
</div>
<div class="row" style="top:644.00px">
<div class="a" style="left:15px;top:12px"><svg width="25" height="25" viewBox="0 0 24 24"><path d="M9.02 3.51 L9.45 0.48 L14.55 0.48 L14.98 3.51 L17.86 5.17 L20.70 4.03 L23.25 8.45 L20.84 10.34 L20.84 13.66 L23.25 15.55 L20.70 19.97 L17.86 18.83 L14.98 20.49 L14.55 23.52 L9.45 23.52 L9.02 20.49 L6.14 18.83 L3.30 19.97 L0.75 15.55 L3.16 13.66 L3.16 10.34 L0.75 8.45 L3.30 4.03 L6.14 5.17 Z" fill="#607d8b"/><circle cx="12" cy="12" r="6.2" fill="#2196f3"/><path d="M9.6 8.6 L15.6 12 L9.6 15.4 Z" fill="#fff"/></svg></div>
<div class="c0" style="left:27px;top:30px">C0</div>
<div class="ttl">Angebot abschließen</div>
<div class="sub">C12RLMAngebotAbschliessen<span style="margin-left:2px"><svg width="15" height="15" viewBox="0 0 15 15" style="display:block"><path d="M14.2 0.8 C10.6 1 7 3.4 4.2 7.6 L7.4 10.8 C11.6 8 14 4.4 14.2 0.8 Z" fill="#c6def7"/><path d="M4.8 6.2 L1.4 7.4 L3.6 4.8 L6.8 4.4 Z" fill="#86b4e6"/><path d="M8.8 10.2 L7.6 13.6 L10.2 11.4 L10.6 8.2 Z" fill="#86b4e6"/><circle cx="10.6" cy="4.4" r="0.9" fill="#74aef0"/><circle cx="7.6" cy="7.4" r="0.8" fill="#74aef0"/><path d="M3.8 8.6 L6.4 11.2 L1 14.2 Z" fill="#f8a35a"/><path d="M3.6 10 L5 11.4 L2.4 12.6 Z" fill="#fcd36a"/></svg></span><span class="chip">Maskenskript, ...</span><span class="chip">Quote</span></div>
<div class="tag">EVI-Basis</div>
</div>
<div class="row" style="top:697.75px">
<div class="a" style="left:15px;top:12px"><svg width="25" height="25" viewBox="0 0 24 24"><path d="M9.02 3.51 L9.45 0.48 L14.55 0.48 L14.98 3.51 L17.86 5.17 L20.70 4.03 L23.25 8.45 L20.84 10.34 L20.84 13.66 L23.25 15.55 L20.70 19.97 L17.86 18.83 L14.98 20.49 L14.55 23.52 L9.45 23.52 L9.02 20.49 L6.14 18.83 L3.30 19.97 L0.75 15.55 L3.16 13.66 L3.16 10.34 L0.75 8.45 L3.30 4.03 L6.14 5.17 Z" fill="#607d8b"/><circle cx="12" cy="12" r="6.2" fill="#2196f3"/><path d="M9.6 8.6 L15.6 12 L9.6 15.4 Z" fill="#fff"/></svg></div>
<div class="c0" style="left:27px;top:30px">C0</div>
<div class="ttl">Angebot anlegen</div>
<div class="sub">C12AngebotAnlegen<span style="margin-left:2px"><svg width="15" height="15" viewBox="0 0 15 15" style="display:block"><path d="M14.2 0.8 C10.6 1 7 3.4 4.2 7.6 L7.4 10.8 C11.6 8 14 4.4 14.2 0.8 Z" fill="#c6def7"/><path d="M4.8 6.2 L1.4 7.4 L3.6 4.8 L6.8 4.4 Z" fill="#86b4e6"/><path d="M8.8 10.2 L7.6 13.6 L10.2 11.4 L10.6 8.2 Z" fill="#86b4e6"/><circle cx="10.6" cy="4.4" r="0.9" fill="#74aef0"/><circle cx="7.6" cy="7.4" r="0.8" fill="#74aef0"/><path d="M3.8 8.6 L6.4 11.2 L1 14.2 Z" fill="#f8a35a"/><path d="M3.6 10 L5 11.4 L2.4 12.6 Z" fill="#fcd36a"/></svg></span></div>
<div class="tag">EVI-Basis</div>
</div>
</div>
<div class="a" style="left:678px;top:98px;width:8px;height:714px;background:#f4f4f4"></div>
<div class="a" style="left:678px;top:99px;width:8px;height:30px;border-radius:4px;background:#c1c1c1"></div>
<div class="a" style="left:0;top:812px;width:686px;height:50px;background:#f5f5f5;border-top:2px solid #e4e4e4"></div>
<div class="t" style="left:16px;top:833px;font-size:12.5px;color:#1d1d1f">Unveröffentlicht</div>
<div class="a" style="left:613px;top:829px;width:22px;height:19px;border-radius:10px;background:#2e4799;color:#fff;font-size:12px;line-height:19px;text-align:center">7</div>
<svg class="a" style="left:647px;top:834px" width="12" height="8" viewBox="0 0 12 8"><path d="M1 1.5 L6 6.2 L11 1.5" stroke="#555" stroke-width="1.3" fill="none"/></svg>
</div>
<svg class="a" style="left:744px;top:627px" width="8" height="11" viewBox="0 0 8 11"><path d="M6 1 L2 5.5 L6 10" stroke="#555" stroke-width="1.3" fill="none"/></svg>
<div class="card" style="left:753px;top:201px;width:1151px;height:425px;overflow:hidden">
<div class="t" style="left:16px;top:26px;font-size:14px;font-weight:bold;color:#1d2230;letter-spacing:-0.42px">Globale Änderungshistorie</div>
<svg class="a" style="left:1041px;top:24px" width="16" height="16" viewBox="0 0 16 16"><path d="M13.2 8 A5.4 5.4 0 1 1 11.5 4" stroke="#2e47a8" stroke-width="1.9" fill="none"/><path d="M9.5 1.2 L14.5 1 L14 6 Z" fill="#2e47a8"/></svg>
<div class="a" style="left:1079px;top:23px;width:1px;height:20px;background:#e0e0e0"></div>
<svg class="a" style="left:1103px;top:26px" width="12" height="12" viewBox="0 0 12 12"><path d="M1 4 V1 H4 M8 1 H11 V4 M11 8 V11 H8 M4 11 H1 V8" stroke="#555" stroke-width="1.4" fill="none"/></svg>
<div class="a" style="left:0;top:57px;width:1143px;height:1px;background:#e8e8e8"></div>
<div class="hrow" style="top:58.00px">
<div class="a" style="left:15px;top:13px"><svg width="26" height="26" viewBox="0 0 26 26"><path d="M21.99 6.42 L23.64 6.60 L23.64 8.40 L21.99 8.58 L21.58 9.85 L22.81 10.97 L21.75 12.43 L20.31 11.61 L19.23 12.39 L19.57 14.01 L17.85 14.57 L17.17 13.06 L15.83 13.06 L15.15 14.57 L13.43 14.01 L13.77 12.39 L12.69 11.61 L11.25 12.43 L10.19 10.97 L11.42 9.85 L11.01 8.58 L9.36 8.40 L9.36 6.60 L11.01 6.42 L11.42 5.15 L10.19 4.03 L11.25 2.57 L12.69 3.39 L13.77 2.61 L13.43 0.99 L15.15 0.43 L15.83 1.94 L17.17 1.94 L17.85 0.43 L19.57 0.99 L19.23 2.61 L20.31 3.39 L21.75 2.57 L22.81 4.03 L21.58 5.15 Z" fill="#c4c4c4" stroke="#a8a8a8" stroke-width="0.5"/><circle cx="16.5" cy="7.5" r="3.3" stroke="#2f86d6" stroke-width="1.6" fill="#dedede"/><path d="M14.78 14.26 L16.64 14.47 L16.64 16.53 L14.78 16.74 L14.31 18.19 L15.69 19.45 L14.48 21.11 L12.85 20.19 L11.62 21.09 L11.99 22.92 L10.04 23.55 L9.26 21.85 L7.74 21.85 L6.96 23.55 L5.01 22.92 L5.38 21.09 L4.15 20.19 L2.52 21.11 L1.31 19.45 L2.69 18.19 L2.22 16.74 L0.36 16.53 L0.36 14.47 L2.22 14.26 L2.69 12.81 L1.31 11.55 L2.52 9.89 L4.15 10.81 L5.38 9.91 L5.01 8.08 L6.96 7.45 L7.74 9.15 L9.26 9.15 L10.04 7.45 L11.99 8.08 L11.62 9.91 L12.85 10.81 L14.48 9.89 L15.69 11.55 L14.31 12.81 Z" fill="#c8c8c8" stroke="#a8a8a8" stroke-width="0.5"/><circle cx="8.5" cy="15.5" r="3.8" stroke="#2f86d6" stroke-width="1.8" fill="#dedede"/><path d="M15.5 10.5 L22.5 23.8 H8.5 Z" fill="#f3c623" stroke="#d9a800" stroke-width="0.6"/><rect x="14.7" y="14.5" width="1.7" height="5" fill="#333"/><rect x="14.7" y="20.6" width="1.7" height="1.7" fill="#333"/></svg></div>
<div class="h1">KI-Klassifizierung Prozess veröffentlicht</div>
<div class="h2">DAMO@CURSOR&nbsp;&nbsp;&nbsp;02.02.2026, 15:57</div>
</div>
<div class="hrow" style="top:111.00px">
<div class="a" style="left:15px;top:13px"><svg width="26" height="26" viewBox="0 0 26 26"><path d="M21.99 6.42 L23.64 6.60 L23.64 8.40 L21.99 8.58 L21.58 9.85 L22.81 10.97 L21.75 12.43 L20.31 11.61 L19.23 12.39 L19.57 14.01 L17.85 14.57 L17.17 13.06 L15.83 13.06 L15.15 14.57 L13.43 14.01 L13.77 12.39 L12.69 11.61 L11.25 12.43 L10.19 10.97 L11.42 9.85 L11.01 8.58 L9.36 8.40 L9.36 6.60 L11.01 6.42 L11.42 5.15 L10.19 4.03 L11.25 2.57 L12.69 3.39 L13.77 2.61 L13.43 0.99 L15.15 0.43 L15.83 1.94 L17.17 1.94 L17.85 0.43 L19.57 0.99 L19.23 2.61 L20.31 3.39 L21.75 2.57 L22.81 4.03 L21.58 5.15 Z" fill="#c4c4c4" stroke="#a8a8a8" stroke-width="0.5"/><circle cx="16.5" cy="7.5" r="3.3" stroke="#2f86d6" stroke-width="1.6" fill="#dedede"/><path d="M14.78 14.26 L16.64 14.47 L16.64 16.53 L14.78 16.74 L14.31 18.19 L15.69 19.45 L14.48 21.11 L12.85 20.19 L11.62 21.09 L11.99 22.92 L10.04 23.55 L9.26 21.85 L7.74 21.85 L6.96 23.55 L5.01 22.92 L5.38 21.09 L4.15 20.19 L2.52 21.11 L1.31 19.45 L2.69 18.19 L2.22 16.74 L0.36 16.53 L0.36 14.47 L2.22 14.26 L2.69 12.81 L1.31 11.55 L2.52 9.89 L4.15 10.81 L5.38 9.91 L5.01 8.08 L6.96 7.45 L7.74 9.15 L9.26 9.15 L10.04 7.45 L11.99 8.08 L11.62 9.91 L12.85 10.81 L14.48 9.89 L15.69 11.55 L14.31 12.81 Z" fill="#c8c8c8" stroke="#a8a8a8" stroke-width="0.5"/><circle cx="8.5" cy="15.5" r="3.8" stroke="#2f86d6" stroke-width="1.8" fill="#dedede"/><path d="M15.5 10.5 L22.5 23.8 H8.5 Z" fill="#f3c623" stroke="#d9a800" stroke-width="0.6"/><rect x="14.7" y="14.5" width="1.7" height="5" fill="#333"/><rect x="14.7" y="20.6" width="1.7" height="1.7" fill="#333"/></svg></div>
<div class="h1">CQ qualifizierte GP-Neuanlage Prozess erstellt</div>
<div class="h2">ANRU@CURSOR&nbsp;&nbsp;&nbsp;30.01.2026, 09:41</div>
</div>
<div class="hrow" style="top:164.00px">
<div class="a" style="left:15px;top:13px"><svg width="26" height="26" viewBox="0 0 26 26"><path d="M21.99 6.42 L23.64 6.60 L23.64 8.40 L21.99 8.58 L21.58 9.85 L22.81 10.97 L21.75 12.43 L20.31 11.61 L19.23 12.39 L19.57 14.01 L17.85 14.57 L17.17 13.06 L15.83 13.06 L15.15 14.57 L13.43 14.01 L13.77 12.39 L12.69 11.61 L11.25 12.43 L10.19 10.97 L11.42 9.85 L11.01 8.58 L9.36 8.40 L9.36 6.60 L11.01 6.42 L11.42 5.15 L10.19 4.03 L11.25 2.57 L12.69 3.39 L13.77 2.61 L13.43 0.99 L15.15 0.43 L15.83 1.94 L17.17 1.94 L17.85 0.43 L19.57 0.99 L19.23 2.61 L20.31 3.39 L21.75 2.57 L22.81 4.03 L21.58 5.15 Z" fill="#c4c4c4" stroke="#a8a8a8" stroke-width="0.5"/><circle cx="16.5" cy="7.5" r="3.3" stroke="#2f86d6" stroke-width="1.6" fill="#dedede"/><path d="M14.78 14.26 L16.64 14.47 L16.64 16.53 L14.78 16.74 L14.31 18.19 L15.69 19.45 L14.48 21.11 L12.85 20.19 L11.62 21.09 L11.99 22.92 L10.04 23.55 L9.26 21.85 L7.74 21.85 L6.96 23.55 L5.01 22.92 L5.38 21.09 L4.15 20.19 L2.52 21.11 L1.31 19.45 L2.69 18.19 L2.22 16.74 L0.36 16.53 L0.36 14.47 L2.22 14.26 L2.69 12.81 L1.31 11.55 L2.52 9.89 L4.15 10.81 L5.38 9.91 L5.01 8.08 L6.96 7.45 L7.74 9.15 L9.26 9.15 L10.04 7.45 L11.99 8.08 L11.62 9.91 L12.85 10.81 L14.48 9.89 L15.69 11.55 L14.31 12.81 Z" fill="#c8c8c8" stroke="#a8a8a8" stroke-width="0.5"/><circle cx="8.5" cy="15.5" r="3.8" stroke="#2f86d6" stroke-width="1.8" fill="#dedede"/><path d="M15.5 10.5 L22.5 23.8 H8.5 Z" fill="#f3c623" stroke="#d9a800" stroke-width="0.6"/><rect x="14.7" y="14.5" width="1.7" height="5" fill="#333"/><rect x="14.7" y="20.6" width="1.7" height="1.7" fill="#333"/></svg></div>
<div class="h1">KI-Klassifizierung Prozess veröffentlicht</div>
<div class="h2">DAMO@CURSOR&nbsp;&nbsp;&nbsp;16.01.2026, 08:48</div>
</div>
<div class="hrow" style="top:217.00px">
<div class="a" style="left:15px;top:13px"><svg width="26" height="26" viewBox="0 0 26 26"><path d="M21.99 6.42 L23.64 6.60 L23.64 8.40 L21.99 8.58 L21.58 9.85 L22.81 10.97 L21.75 12.43 L20.31 11.61 L19.23 12.39 L19.57 14.01 L17.85 14.57 L17.17 13.06 L15.83 13.06 L15.15 14.57 L13.43 14.01 L13.77 12.39 L12.69 11.61 L11.25 12.43 L10.19 10.97 L11.42 9.85 L11.01 8.58 L9.36 8.40 L9.36 6.60 L11.01 6.42 L11.42 5.15 L10.19 4.03 L11.25 2.57 L12.69 3.39 L13.77 2.61 L13.43 0.99 L15.15 0.43 L15.83 1.94 L17.17 1.94 L17.85 0.43 L19.57 0.99 L19.23 2.61 L20.31 3.39 L21.75 2.57 L22.81 4.03 L21.58 5.15 Z" fill="#c4c4c4" stroke="#a8a8a8" stroke-width="0.5"/><circle cx="16.5" cy="7.5" r="3.3" stroke="#2f86d6" stroke-width="1.6" fill="#dedede"/><path d="M14.78 14.26 L16.64 14.47 L16.64 16.53 L14.78 16.74 L14.31 18.19 L15.69 19.45 L14.48 21.11 L12.85 20.19 L11.62 21.09 L11.99 22.92 L10.04 23.55 L9.26 21.85 L7.74 21.85 L6.96 23.55 L5.01 22.92 L5.38 21.09 L4.15 20.19 L2.52 21.11 L1.31 19.45 L2.69 18.19 L2.22 16.74 L0.36 16.53 L0.36 14.47 L2.22 14.26 L2.69 12.81 L1.31 11.55 L2.52 9.89 L4.15 10.81 L5.38 9.91 L5.01 8.08 L6.96 7.45 L7.74 9.15 L9.26 9.15 L10.04 7.45 L11.99 8.08 L11.62 9.91 L12.85 10.81 L14.48 9.89 L15.69 11.55 L14.31 12.81 Z" fill="#c8c8c8" stroke="#a8a8a8" stroke-width="0.5"/><circle cx="8.5" cy="15.5" r="3.8" stroke="#2f86d6" stroke-width="1.8" fill="#dedede"/><path d="M15.5 10.5 L22.5 23.8 H8.5 Z" fill="#f3c623" stroke="#d9a800" stroke-width="0.6"/><rect x="14.7" y="14.5" width="1.7" height="5" fill="#333"/><rect x="14.7" y="20.6" width="1.7" height="1.7" fill="#333"/></svg></div>
<div class="c0" style="left:28px;top:29px">C0</div>
<div class="h1">Anlagenkonten aus abhängigen Entitäten aktualisieren Prozess veröffentlicht</div>
<div class="h2">JAKO@CURSOR&nbsp;&nbsp;&nbsp;16.01.2026, 07:50</div>
</div>
<div class="hrow" style="top:270.00px">
<div class="a" style="left:15px;top:13px"><svg width="26" height="26" viewBox="0 0 26 26"><path d="M21.99 6.42 L23.64 6.60 L23.64 8.40 L21.99 8.58 L21.58 9.85 L22.81 10.97 L21.75 12.43 L20.31 11.61 L19.23 12.39 L19.57 14.01 L17.85 14.57 L17.17 13.06 L15.83 13.06 L15.15 14.57 L13.43 14.01 L13.77 12.39 L12.69 11.61 L11.25 12.43 L10.19 10.97 L11.42 9.85 L11.01 8.58 L9.36 8.40 L9.36 6.60 L11.01 6.42 L11.42 5.15 L10.19 4.03 L11.25 2.57 L12.69 3.39 L13.77 2.61 L13.43 0.99 L15.15 0.43 L15.83 1.94 L17.17 1.94 L17.85 0.43 L19.57 0.99 L19.23 2.61 L20.31 3.39 L21.75 2.57 L22.81 4.03 L21.58 5.15 Z" fill="#c4c4c4" stroke="#a8a8a8" stroke-width="0.5"/><circle cx="16.5" cy="7.5" r="3.3" stroke="#2f86d6" stroke-width="1.6" fill="#dedede"/><path d="M14.78 14.26 L16.64 14.47 L16.64 16.53 L14.78 16.74 L14.31 18.19 L15.69 19.45 L14.48 21.11 L12.85 20.19 L11.62 21.09 L11.99 22.92 L10.04 23.55 L9.26 21.85 L7.74 21.85 L6.96 23.55 L5.01 22.92 L5.38 21.09 L4.15 20.19 L2.52 21.11 L1.31 19.45 L2.69 18.19 L2.22 16.74 L0.36 16.53 L0.36 14.47 L2.22 14.26 L2.69 12.81 L1.31 11.55 L2.52 9.89 L4.15 10.81 L5.38 9.91 L5.01 8.08 L6.96 7.45 L7.74 9.15 L9.26 9.15 L10.04 7.45 L11.99 8.08 L11.62 9.91 L12.85 10.81 L14.48 9.89 L15.69 11.55 L14.31 12.81 Z" fill="#c8c8c8" stroke="#a8a8a8" stroke-width="0.5"/><circle cx="8.5" cy="15.5" r="3.8" stroke="#2f86d6" stroke-width="1.8" fill="#dedede"/><path d="M15.5 10.5 L22.5 23.8 H8.5 Z" fill="#f3c623" stroke="#d9a800" stroke-width="0.6"/><rect x="14.7" y="14.5" width="1.7" height="5" fill="#333"/><rect x="14.7" y="20.6" width="1.7" height="1.7" fill="#333"/></svg></div>
<div class="h1">Angebot erstellen Prozess veröffentlicht</div>
<div class="h2">JAKO@CURSOR&nbsp;&nbsp;&nbsp;15.01.2026, 08:36</div>
</div>
<div class="hrow" style="top:323.00px">
<div class="a" style="left:15px;top:13px"><svg width="26" height="26" viewBox="0 0 26 26"><path d="M21.99 6.42 L23.64 6.60 L23.64 8.40 L21.99 8.58 L21.58 9.85 L22.81 10.97 L21.75 12.43 L20.31 11.61 L19.23 12.39 L19.57 14.01 L17.85 14.57 L17.17 13.06 L15.83 13.06 L15.15 14.57 L13.43 14.01 L13.77 12.39 L12.69 11.61 L11.25 12.43 L10.19 10.97 L11.42 9.85 L11.01 8.58 L9.36 8.40 L9.36 6.60 L11.01 6.42 L11.42 5.15 L10.19 4.03 L11.25 2.57 L12.69 3.39 L13.77 2.61 L13.43 0.99 L15.15 0.43 L15.83 1.94 L17.17 1.94 L17.85 0.43 L19.57 0.99 L19.23 2.61 L20.31 3.39 L21.75 2.57 L22.81 4.03 L21.58 5.15 Z" fill="#c4c4c4" stroke="#a8a8a8" stroke-width="0.5"/><circle cx="16.5" cy="7.5" r="3.3" stroke="#2f86d6" stroke-width="1.6" fill="#dedede"/><path d="M14.78 14.26 L16.64 14.47 L16.64 16.53 L14.78 16.74 L14.31 18.19 L15.69 19.45 L14.48 21.11 L12.85 20.19 L11.62 21.09 L11.99 22.92 L10.04 23.55 L9.26 21.85 L7.74 21.85 L6.96 23.55 L5.01 22.92 L5.38 21.09 L4.15 20.19 L2.52 21.11 L1.31 19.45 L2.69 18.19 L2.22 16.74 L0.36 16.53 L0.36 14.47 L2.22 14.26 L2.69 12.81 L1.31 11.55 L2.52 9.89 L4.15 10.81 L5.38 9.91 L5.01 8.08 L6.96 7.45 L7.74 9.15 L9.26 9.15 L10.04 7.45 L11.99 8.08 L11.62 9.91 L12.85 10.81 L14.48 9.89 L15.69 11.55 L14.31 12.81 Z" fill="#c8c8c8" stroke="#a8a8a8" stroke-width="0.5"/><circle cx="8.5" cy="15.5" r="3.8" stroke="#2f86d6" stroke-width="1.8" fill="#dedede"/><path d="M15.5 10.5 L22.5 23.8 H8.5 Z" fill="#f3c623" stroke="#d9a800" stroke-width="0.6"/><rect x="14.7" y="14.5" width="1.7" height="5" fill="#333"/><rect x="14.7" y="20.6" width="1.7" height="1.7" fill="#333"/></svg></div>
<div class="h1">Kampagne anlegen Prozess veröffentlicht</div>
<div class="h2">ANRU@CURSOR&nbsp;&nbsp;&nbsp;14.01.2026, 18:17</div>
</div>
<div class="hrow" style="top:376.00px">
<div class="a" style="left:15px;top:13px"><svg width="26" height="26" viewBox="0 0 26 26"><path d="M21.99 6.42 L23.64 6.60 L23.64 8.40 L21.99 8.58 L21.58 9.85 L22.81 10.97 L21.75 12.43 L20.31 11.61 L19.23 12.39 L19.57 14.01 L17.85 14.57 L17.17 13.06 L15.83 13.06 L15.15 14.57 L13.43 14.01 L13.77 12.39 L12.69 11.61 L11.25 12.43 L10.19 10.97 L11.42 9.85 L11.01 8.58 L9.36 8.40 L9.36 6.60 L11.01 6.42 L11.42 5.15 L10.19 4.03 L11.25 2.57 L12.69 3.39 L13.77 2.61 L13.43 0.99 L15.15 0.43 L15.83 1.94 L17.17 1.94 L17.85 0.43 L19.57 0.99 L19.23 2.61 L20.31 3.39 L21.75 2.57 L22.81 4.03 L21.58 5.15 Z" fill="#c4c4c4" stroke="#a8a8a8" stroke-width="0.5"/><circle cx="16.5" cy="7.5" r="3.3" stroke="#2f86d6" stroke-width="1.6" fill="#dedede"/><path d="M14.78 14.26 L16.64 14.47 L16.64 16.53 L14.78 16.74 L14.31 18.19 L15.69 19.45 L14.48 21.11 L12.85 20.19 L11.62 21.09 L11.99 22.92 L10.04 23.55 L9.26 21.85 L7.74 21.85 L6.96 23.55 L5.01 22.92 L5.38 21.09 L4.15 20.19 L2.52 21.11 L1.31 19.45 L2.69 18.19 L2.22 16.74 L0.36 16.53 L0.36 14.47 L2.22 14.26 L2.69 12.81 L1.31 11.55 L2.52 9.89 L4.15 10.81 L5.38 9.91 L5.01 8.08 L6.96 7.45 L7.74 9.15 L9.26 9.15 L10.04 7.45 L11.99 8.08 L11.62 9.91 L12.85 10.81 L14.48 9.89 L15.69 11.55 L14.31 12.81 Z" fill="#c8c8c8" stroke="#a8a8a8" stroke-width="0.5"/><circle cx="8.5" cy="15.5" r="3.8" stroke="#2f86d6" stroke-width="1.8" fill="#dedede"/><path d="M15.5 10.5 L22.5 23.8 H8.5 Z" fill="#f3c623" stroke="#d9a800" stroke-width="0.6"/><rect x="14.7" y="14.5" width="1.7" height="5" fill="#333"/><rect x="14.7" y="20.6" width="1.7" height="1.7" fill="#333"/></svg></div>
<div class="h1">KI Analyse Prozess veröffentlicht</div>
<div class="h2">DAMO@CURSOR&nbsp;&nbsp;&nbsp;14.01.2026, 18:16</div>
</div>
<div class="hrow" style="top:429.00px">
<div class="a" style="left:15px;top:13px"><svg width="26" height="26" viewBox="0 0 26 26"><path d="M21.99 6.42 L23.64 6.60 L23.64 8.40 L21.99 8.58 L21.58 9.85 L22.81 10.97 L21.75 12.43 L20.31 11.61 L19.23 12.39 L19.57 14.01 L17.85 14.57 L17.17 13.06 L15.83 13.06 L15.15 14.57 L13.43 14.01 L13.77 12.39 L12.69 11.61 L11.25 12.43 L10.19 10.97 L11.42 9.85 L11.01 8.58 L9.36 8.40 L9.36 6.60 L11.01 6.42 L11.42 5.15 L10.19 4.03 L11.25 2.57 L12.69 3.39 L13.77 2.61 L13.43 0.99 L15.15 0.43 L15.83 1.94 L17.17 1.94 L17.85 0.43 L19.57 0.99 L19.23 2.61 L20.31 3.39 L21.75 2.57 L22.81 4.03 L21.58 5.15 Z" fill="#c4c4c4" stroke="#a8a8a8" stroke-width="0.5"/><circle cx="16.5" cy="7.5" r="3.3" stroke="#2f86d6" stroke-width="1.6" fill="#dedede"/><path d="M14.78 14.26 L16.64 14.47 L16.64 16.53 L14.78 16.74 L14.31 18.19 L15.69 19.45 L14.48 21.11 L12.85 20.19 L11.62 21.09 L11.99 22.92 L10.04 23.55 L9.26 21.85 L7.74 21.85 L6.96 23.55 L5.01 22.92 L5.38 21.09 L4.15 20.19 L2.52 21.11 L1.31 19.45 L2.69 18.19 L2.22 16.74 L0.36 16.53 L0.36 14.47 L2.22 14.26 L2.69 12.81 L1.31 11.55 L2.52 9.89 L4.15 10.81 L5.38 9.91 L5.01 8.08 L6.96 7.45 L7.74 9.15 L9.26 9.15 L10.04 7.45 L11.99 8.08 L11.62 9.91 L12.85 10.81 L14.48 9.89 L15.69 11.55 L14.31 12.81 Z" fill="#c8c8c8" stroke="#a8a8a8" stroke-width="0.5"/><circle cx="8.5" cy="15.5" r="3.8" stroke="#2f86d6" stroke-width="1.8" fill="#dedede"/><path d="M15.5 10.5 L22.5 23.8 H8.5 Z" fill="#f3c623" stroke="#d9a800" stroke-width="0.6"/><rect x="14.7" y="14.5" width="1.7" height="5" fill="#333"/><rect x="14.7" y="20.6" width="1.7" height="1.7" fill="#333"/></svg></div>
<div class="h1">Kampagne anlegen Prozess erstellt</div>
<div class="h2">ANRU@CURSOR&nbsp;&nbsp;&nbsp;14.01.2026, 18:10</div>
</div>
<div class="a" style="left:1143px;top:58px;width:8px;height:367px;background:#f5f5f5"></div>
<div class="a" style="left:1143px;top:63px;width:8px;height:26px;border-radius:4px;background:#c1c1c1"></div>
</div>
<div class="card" style="left:753px;top:638px;width:1151px;height:425px;overflow:hidden">
<div class="t" style="left:16px;top:26px;font-size:14px;font-weight:bold;color:#1d2230;letter-spacing:-0.4px">Globale Auswertung</div>
<svg class="a" style="left:1103px;top:26px" width="12" height="12" viewBox="0 0 12 12"><path d="M1 4 V1 H4 M8 1 H11 V4 M11 8 V11 H8 M4 11 H1 V8" stroke="#555" stroke-width="1.4" fill="none"/></svg>
<div class="t" style="left:16px;top:82px;font-size:12px;color:#1d1d1f">Betrachtungszeitraum liegt zwischen</div>
<div class="t" style="left:221px;top:78px;font-size:12px;color:#1d1d1f">01.01.2026&nbsp;&nbsp;-&nbsp;&nbsp;15.02.2026</div>
<div class="a" style="left:221px;top:97px;width:224px;height:1px;background:#8a8a8a"></div>
<svg class="a" style="left:421px;top:79px" width="14" height="14" viewBox="0 0 14 14"><rect x="1" y="2.5" width="12" height="10.5" rx="1.2" stroke="#666" stroke-width="1.3" fill="none"/><rect x="1" y="2.5" width="12" height="2.6" fill="#666"/><rect x="3.5" y="0.5" width="1.4" height="3" fill="#666"/><rect x="9.1" y="0.5" width="1.4" height="3" fill="#666"/><rect x="3.5" y="8" width="1.3" height="1.3" fill="#666"/><rect x="6.3" y="8" width="1.3" height="1.3" fill="#666"/><rect x="9.1" y="8" width="1.3" height="1.3" fill="#666"/></svg>
<div class="a" style="left:457px;top:72px;width:123px;height:29px;border-radius:3px;background:#2e4799;box-shadow:0 1px 2px rgba(0,0,0,.25)"></div>
<div class="t" style="left:467px;top:80px;font-size:12.5px;color:#fff">Auswertung starten</div>
<div class="a" style="left:16px;top:113px;width:1118px;height:294px;border:1px solid #e0e0e0;border-radius:4px;overflow:hidden">
<div class="a" style="left:0;top:0;width:1116px;height:39px;border-bottom:1px solid #dedede"></div>
<div class="t" style="left:10px;top:14px;font-size:12px;font-weight:bold;color:#1d1d1f">Prozessname</div>
<div class="t" style="left:249px;top:14px;width:200px;text-align:right;font-size:12px;font-weight:bold;color:#1d1d1f">In Bearbeitung</div>
<div class="t" style="left:379px;top:14px;width:200px;text-align:right;font-size:12px;font-weight:bold;color:#1d1d1f">Wartend</div>
<div class="t" style="left:509px;top:14px;width:200px;text-align:right;font-size:12px;font-weight:bold;color:#1d1d1f">Fehlerhaft</div>
<div class="t" style="left:639px;top:14px;width:200px;text-align:right;font-size:12px;font-weight:bold;color:#1d1d1f">Abgeschlossen</div>
<div class="t" style="left:769px;top:14px;width:200px;text-align:right;font-size:12px;font-weight:bold;color:#1d1d1f">Abgebrochen</div>
<div class="t" style="left:899px;top:14px;width:200px;text-align:right;font-size:12px;font-weight:bold;color:#1d1d1f">Gelöscht</div>
<div class="a" style="left:329px;top:11px;width:2px;height:17px;background:#dcdcdc"></div>
<div class="a" style="left:459px;top:11px;width:2px;height:17px;background:#dcdcdc"></div>
<div class="a" style="left:589px;top:11px;width:2px;height:17px;background:#dcdcdc"></div>
<div class="a" style="left:719px;top:11px;width:2px;height:17px;background:#dcdcdc"></div>
<div class="a" style="left:849px;top:11px;width:2px;height:17px;background:#dcdcdc"></div>
<div class="a" style="left:979px;top:11px;width:2px;height:17px;background:#dcdcdc"></div>
<div class="a" style="left:1109px;top:11px;width:2px;height:17px;background:#dcdcdc"></div>
<div class="trow" style="top:39px">
<div class="tc" style="left:10px">Angebot erstellen</div>
<div class="tc num" style="left:329px">0</div>
<div class="tc num" style="left:459px">0</div>
<div class="tc num" style="left:589px">7</div>
<div class="tc num" style="left:719px">11</div>
<div class="tc num" style="left:849px">0</div>
<div class="tc num" style="left:979px">21</div>
</div>
<div class="trow" style="top:75px">
<div class="tc" style="left:10px">Angebot erstellen</div>
<div class="tc num" style="left:329px">0</div>
<div class="tc num" style="left:459px">7</div>
<div class="tc num" style="left:589px">0</div>
<div class="tc num" style="left:719px">10</div>
<div class="tc num" style="left:849px">0</div>
<div class="tc num" style="left:979px">21</div>
</div>
<div class="trow" style="top:111px">
<div class="tc" style="left:10px">Anlagenkonten aus abhängigen Entitäten aktualisieren</div>
<div class="tc num" style="left:329px">0</div>
<div class="tc num" style="left:459px">0</div>
<div class="tc num" style="left:589px">0</div>
<div class="tc num" style="left:719px">21</div>
<div class="tc num" style="left:849px">0</div>
<div class="tc num" style="left:979px">0</div>
</div>
<div class="trow" style="top:147px">
<div class="tc" style="left:10px">AutoSubscribeDiscussionRoomOnComment</div>
<div class="tc num" style="left:329px">0</div>
<div class="tc num" style="left:459px">0</div>
<div class="tc num" style="left:589px">0</div>
<div class="tc num" style="left:719px">2</div>
<div class="tc num" style="left:849px">0</div>
<div class="tc num" style="left:979px">0</div>
</div>
<div class="trow" style="top:183px">
<div class="tc" style="left:10px">CQ qualifizierte GP-Neuanlage</div>
<div class="tc num" style="left:329px">0</div>
<div class="tc num" style="left:459px">1</div>
<div class="tc num" style="left:589px">0</div>
<div class="tc num" style="left:719px">0</div>
<div class="tc num" style="left:849px">0</div>
<div class="tc num" style="left:979px">0</div>
</div>
<div class="trow" style="top:219px">
<div class="tc" style="left:10px">CQSearchCriteria</div>
<div class="tc num" style="left:329px">1</div>
<div class="tc num" style="left:459px">0</div>
<div class="tc num" style="left:589px">0</div>
<div class="tc num" style="left:719px">0</div>
<div class="tc num" style="left:849px">0</div>
<div class="tc num" style="left:979px">0</div>
</div>
<div class="trow" style="top:255px">
<div class="tc" style="left:10px">Gelöschte Aktivitäten erzeugen</div>
<div class="tc num" style="left:329px">0</div>
<div class="tc num" style="left:459px">0</div>
<div class="tc num" style="left:589px">0</div>
<div class="tc num" style="left:719px">2</div>
<div class="tc num" style="left:849px">0</div>
<div class="tc num" style="left:979px">0</div>
</div>
<div class="trow" style="top:291px">
<div class="tc" style="left:10px">Kampagne anlegen</div>
<div class="tc num" style="left:329px">0</div>
<div class="tc num" style="left:459px">0</div>
<div class="tc num" style="left:589px">0</div>
<div class="tc num" style="left:719px">1</div>
<div class="tc num" style="left:849px">0</div>
<div class="tc num" style="left:979px">0</div>
</div>
<div class="a" style="left:1109px;top:39px;width:8px;height:255px;background:#f5f5f5"></div>
<div class="a" style="left:1109px;top:40px;width:8px;height:62px;border-radius:4px;background:#c1c1c1"></div>
</div>
</div>
<svg class="a" style="left:0;top:0;pointer-events:none" width="1920" height="1080" viewBox="0 0 1920 1080"><path d="M566 637 L729 666 M715 647.5 L729 666 L709.5 679.5" stroke="#e0192b" stroke-width="5" stroke-linecap="round" stroke-linejoin="round" fill="none"/></svg>
</body></html>
